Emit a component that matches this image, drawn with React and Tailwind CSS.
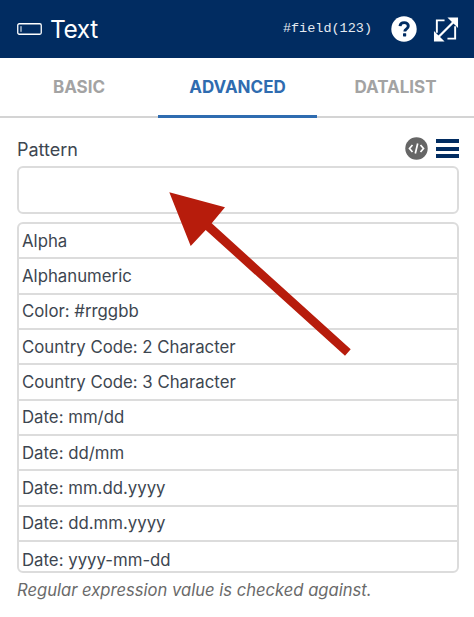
const font = "font-['Inter','Noto_Sans',sans-serif]";

const patterns = [
  "Alpha",
  "Alphanumeric",
  "Color: #rrggbb",
  "Country Code: 2 Character",
  "Country Code: 3 Character",
  "Date: mm/dd",
  "Date: dd/mm",
  "Date: mm.dd.yyyy",
  "Date: dd.mm.yyyy",
  "Date: yyyy-mm-dd",
];

function App() {
  return (
    <div className={`relative h-[617px] w-[474px] overflow-hidden bg-white ${font}`}>
      {/* header */}
      <div className="flex h-[58px] items-center bg-[#012c61] pl-[17px] pr-[15px] text-white">
        <svg width="25" height="12" viewBox="0 0 25 12" fill="none" className="mr-[8px]">
          <rect x="0.75" y="0.75" width="23.5" height="10.5" rx="1.5" stroke="white" strokeWidth="1.3" />
          <path d="M4 3.2V8.8" stroke="white" strokeWidth="1" />
        </svg>
        <span className="text-[24.5px] leading-none tracking-[-0.4px]">Text</span>
        <span className="ml-auto mr-[19px] font-['Liberation_Mono',monospace] text-[13.5px] text-[#e4e9f0]">#field(123)</span>
        <svg width="26" height="26" viewBox="0 0 26 26" className="mr-[16px]">
          <circle cx="13" cy="13" r="12.7" fill="white" />
          <path d="M9 10.2C9.2 7.9 10.9 6.6 13.2 6.6C15.6 6.6 17.3 8 17.3 10C17.3 11.5 16.5 12.4 15.2 13.2C14.1 13.9 13.8 14.3 13.8 15.4" fill="none" stroke="#012c61" strokeWidth="2.9" />
          <rect x="12" y="17.2" width="3.2" height="3.2" rx="0.6" fill="#012c61" />
        </svg>
        <svg width="26" height="27" viewBox="0 0 27 27" fill="none">
          <path d="M12 4H4V17M15 23H23V10" stroke="white" strokeWidth="2" />
          <path d="M6 21L21 6" stroke="white" strokeWidth="2.4" />
          <path d="M15 1H26V12ZM1 26V15L12 26Z" fill="white" />
        </svg>
      </div>

      {/* tabs */}
      <div className="flex h-[60px] border-b-2 border-[#d4d4d4] text-[17px] font-bold leading-none">
        <div className="flex w-[158px] items-center justify-center text-[#a3a3a3]">BASIC</div>
        <div className="-mb-[2px] flex w-[159px] items-center justify-center border-b-[3px] border-[#2f6cb0] pt-[1px] text-[#2f6cb0]">ADVANCED</div>
        <div className="flex w-[157px] items-center justify-center text-[#a3a3a3]">DATALIST</div>
      </div>

      {/* field */}
      <div className="pl-[17px] pr-[15px] pt-[19px]">
        <div className="flex h-[29px] items-start justify-between">
          <span className="mt-[1px] text-[18px] leading-[24px] text-[#3d4650]">Pattern</span>
          <div className="flex items-center gap-[8px]">
            <svg width="23" height="23" viewBox="0 0 23 23" fill="none">
              <circle cx="11.5" cy="11.5" r="11.2" fill="#666666" />
              <path d="M7.5 8L4.5 11.5L7.5 15M15.5 8L18.5 11.5L15.5 15M12.7 6.5L10.3 16.5" stroke="white" strokeWidth="1.7" />
            </svg>
            <div className="flex w-[23px] flex-col gap-[3.5px]">
              <div className="h-[4px] bg-[#012c61]" />
              <div className="h-[4px] bg-[#012c61]" />
              <div className="h-[4px] bg-[#012c61]" />
            </div>
          </div>
        </div>
        <div className="h-[48px] rounded-[6px] border-2 border-[#dcdcdc]" />
        <div className="mt-[8px] h-[351px] overflow-hidden rounded-[6px] border-2 border-[#dcdcdc]">
          {patterns.map((p) => (
            <div
              key={p}
              className="flex h-[35.35px] items-center border-b-2 border-[#dcdcdc] pl-[3px] pt-[1px] text-[16.8px] text-[#3d4650] last:border-b-0"
            >
              {p}
            </div>
          ))}
        </div>
        <p className="mt-[6px] text-[16.6px] italic leading-[22px] text-[#6a6a6a]">Regular expression value is checked against.</p>
      </div>

      {/* red arrow laid over the form */}
      <svg width="474" height="617" viewBox="0 0 474 617" className="absolute left-0 top-0">
        <polygon
          points="169.3,192.3 225,207.3 211.7,223.3 350.7,349.3 345,355.7 205.7,230 190.7,246"
          fill="#b71c0c"
        />
      </svg>
    </div>
  );
}

export default App;
